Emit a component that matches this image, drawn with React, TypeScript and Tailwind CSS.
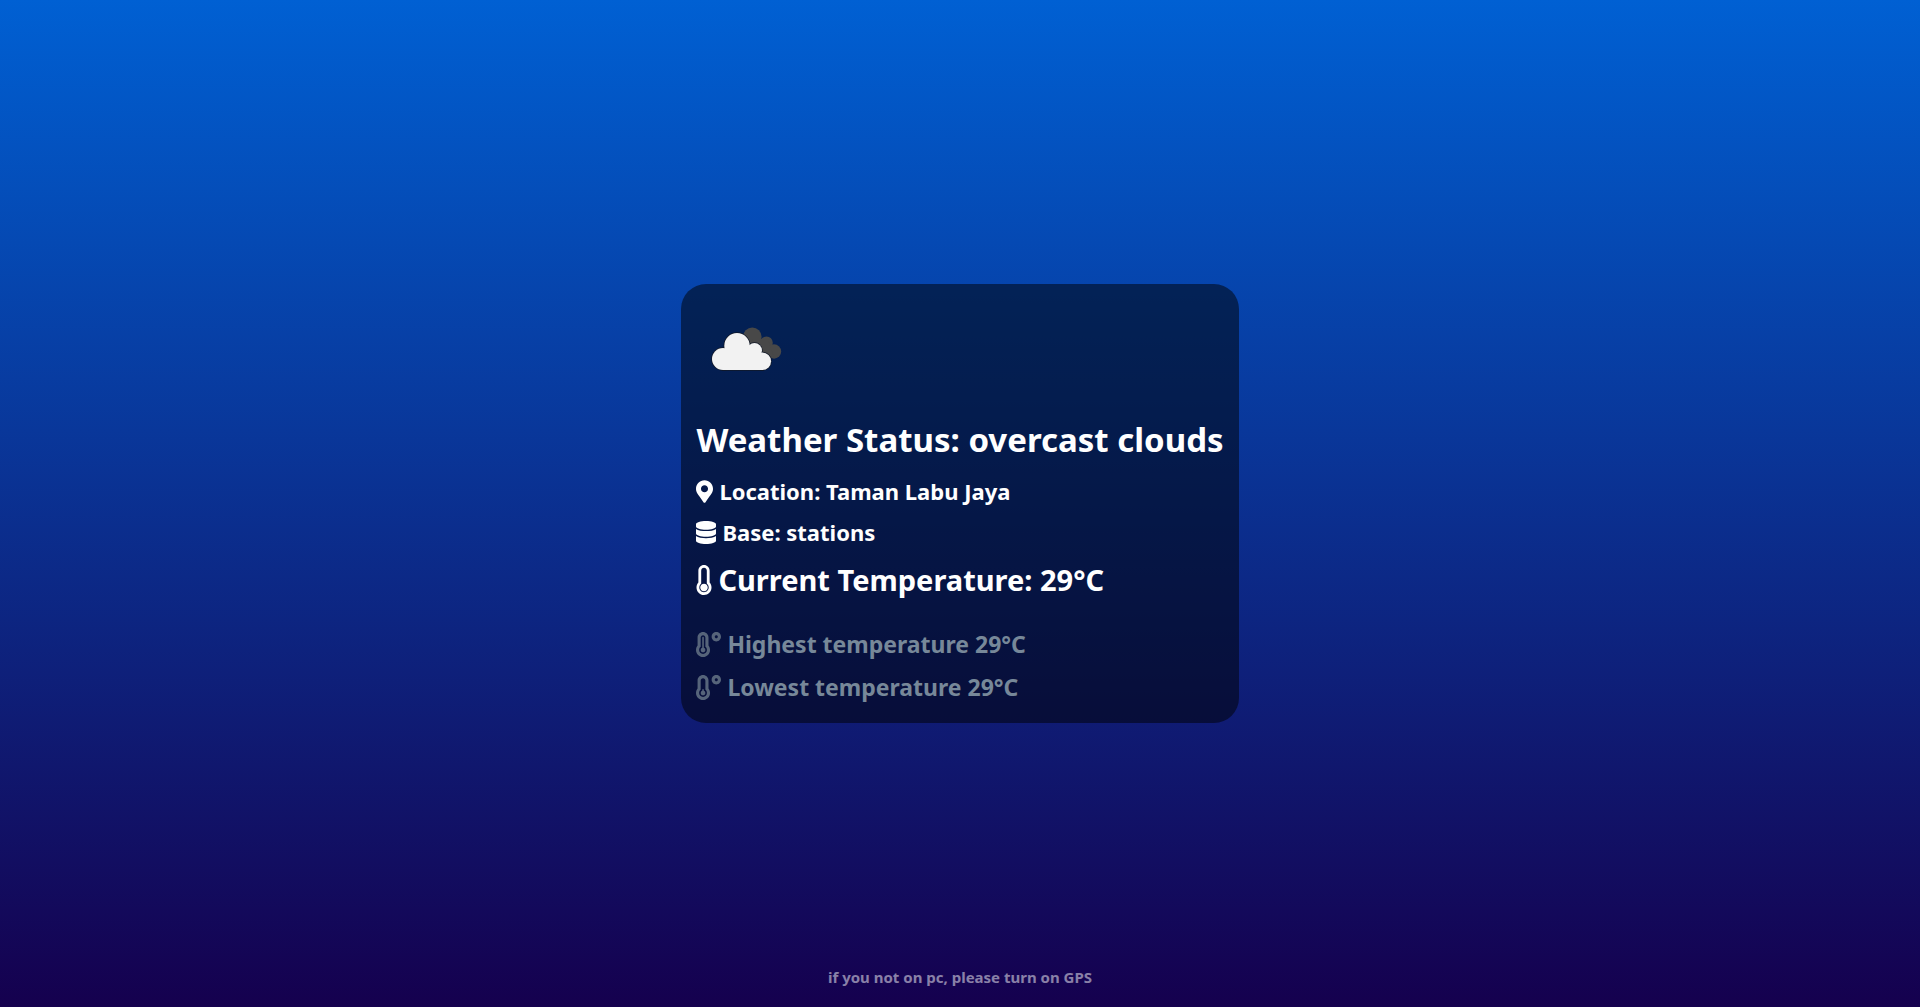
import { FaDatabase, FaMapMarkerAlt, FaTemperatureHigh, FaTemperatureLow, FaThermometerEmpty } from 'react-icons/fa';

function WhiteCloud() {
  return (
    <>
      <circle cx="27" cy="60" r="11" />
      <circle cx="41" cy="46.700" r="12.700" />
      <circle cx="58.500" cy="51.500" r="7.500" />
      <circle cx="66.300" cy="62.200" r="8.800" />
      <path d="M27 56L41 46L59 52L67 60V71H27z" />
    </>
  );
}

function OvercastIcon() {
  return (
    <svg viewBox="0 0 100 100" className="size-[100px]" role="img" aria-label="overcast clouds">
      <g fill="#484848">
        <circle cx="56.300" cy="37.800" r="9.300" />
        <circle cx="70.500" cy="43.800" r="6.300" />
        <circle cx="78" cy="52.500" r="7.200" />
        <path d="M56 40h16l6 19L58 52z" />
      </g>
      <g fill="#111827" stroke="#111827" strokeWidth="1.500">
        <WhiteCloud />
      </g>
      <g fill="#f2f2f2">
        <WhiteCloud />
      </g>
    </svg>
  );
}

export default function App() {
  return (
    <div className="flex min-h-screen flex-col bg-[linear-gradient(to_bottom,#0060d3,#15004e)] font-['Noto_Sans','Open_Sans',sans-serif] font-bold text-white">
      <main className="flex flex-1 items-center justify-center pt-10">
        <section className="rounded-[25px] bg-black/50 px-[15px] pt-[15px] pb-5">
          <OvercastIcon />
          <h1 className="mt-4 text-[33px] leading-[50px]">Weather Status: overcast clouds</h1>
          <p className="mt-[10px] flex items-center gap-[6px] text-[22px] leading-8">
            <FaMapMarkerAlt className="h-[23px] w-[17px]" />
            Location: Taman Labu Jaya
          </p>
          <p className="mt-[9px] flex items-center gap-[6px] text-[22px] leading-8">
            <FaDatabase className="h-[23px] w-5" />
            Base: stations
          </p>
          <h2 className="mt-3 flex items-center gap-[6px] text-[29px] leading-10">
            <FaThermometerEmpty className="h-[30px] w-4" />
            Current Temperature: 29°C
          </h2>
          <div className="mt-7 text-[#778899]">
            <p className="flex items-center gap-[6px] text-[23px] leading-8">
              <FaTemperatureHigh className="size-[25px] text-[#56647a]" />
              Highest temperature 29°C
            </p>
            <p className="mt-[11px] flex items-center gap-[6px] text-[23px] leading-8">
              <FaTemperatureLow className="size-[25px] text-[#56647a]" />
              Lowest temperature 29°C
            </p>
          </div>
        </section>
      </main>
      <footer className="pb-5 text-center text-[15px] leading-5 text-white/50">if you not on pc, please turn on GPS</footer>
    </div>
  );
}
